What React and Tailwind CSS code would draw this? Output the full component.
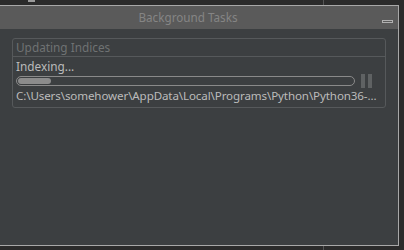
export default function App() {
  const font = { fontFamily: '"Noto Sans", "Open Sans", sans-serif' };
  return (
    <div className="w-[404px] h-[250px] bg-[#2b2b2b] flex flex-col overflow-hidden" style={font}>
      {/* top strip */}
      <div className="h-[5px] flex shrink-0">
        <div className="w-[28px]" />
        <div className="w-[7px] h-[2px] bg-[#9a9a9a]" />
        <div className="w-[288px]" />
        <div className="w-[1px] h-[5px] bg-[#555555]" />
      </div>
      {/* window */}
      <div className="w-[399px] h-[241px] shrink-0 border-t border-r border-b border-[#a8a8a8] flex flex-col">
        <div className="h-[23px] bg-[#5a5a5a] flex items-center relative shrink-0">
          <div className="flex-1 text-center text-[11.7px] text-[#858585] leading-none pr-[22px]">Background Tasks</div>
          <div className="absolute left-[382px] top-[14px] w-[11px] h-[3px] border border-[#b0b0b0]" />
        </div>
        <div className="flex-1 bg-[#3c3f41] pt-[9px] pl-[12px]">
          <div className="w-[374px] h-[70px] border border-[#56595b] rounded-[3px] flex flex-col overflow-hidden">
            <div className="h-[18px] pl-[3px] flex items-center text-[11.8px] text-[#6f7273] leading-none border-b border-[#56595b]">
              Updating Indices
            </div>
            <div className="pl-[3px] pt-[2px] text-[11.8px] text-[#bbbbbb] leading-[14px]">Indexing...</div>
            <div className="flex items-center pl-[3px] mt-[2px] h-[12px]">
              <div className="w-[339px] h-[10px] border border-[#8a8a8a] rounded-full p-[1px] flex">
                <div className="w-[33px] h-full rounded-full bg-[#8c8c8c]" />
              </div>
              <div className="ml-[6px] flex gap-[3px] h-[14px]">
                <div className="w-[4px] h-full bg-[#5f6263]" />
                <div className="w-[4px] h-full bg-[#5f6263]" />
              </div>
            </div>
            <div className="pl-[3px] pt-[2px] text-[11.6px] tracking-[-0.12px] text-[#bbbbbb] leading-[14px] whitespace-nowrap">
              C:\Users\somehower\AppData\Local\Programs\Python\Python36-...
            </div>
          </div>
        </div>
      </div>
      <div className="h-[4px] flex shrink-0">
        <div className="w-[323px]" />
        <div className="w-[1px] h-full bg-[#555555]" />
      </div>
    </div>
  );
}
